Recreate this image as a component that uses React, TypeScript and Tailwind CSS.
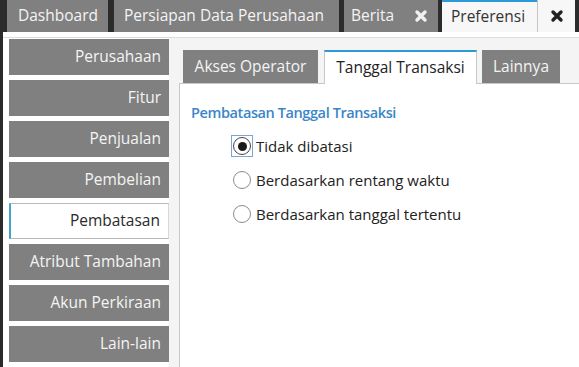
import React from 'react';

const CloseIcon: React.FC<{ className?: string }> = ({ className }) => (
  <svg viewBox="0 0 14 14" className={className} fill="none">
    <path d="M3 3 L11 11 M11 3 L3 11" stroke="currentColor" strokeWidth="3.4" strokeLinecap="round" />
  </svg>
);

const Radio: React.FC<{ checked?: boolean; label: string }> = ({ checked, label }) => (
  <div className="flex items-center h-[34px]">
    <div className={`w-[22px] h-[22px] flex items-center justify-center ${checked ? 'border border-[#7aa7d6]' : ''}`}>
      <div className={`w-[18px] h-[18px] rounded-full border-[1.5px] bg-white flex items-center justify-center ${checked ? 'border-[#444]' : 'border-[#8c8c8c]'}`}>
        {checked && <div className="w-[9px] h-[9px] rounded-full bg-[#1a1a1a]" />}
      </div>
    </div>
    <span className="ml-[3px] text-[15px] text-[#222]">{label}</span>
  </div>
);

const menu = ['Perusahaan', 'Fitur', 'Penjualan', 'Pembelian', 'Pembatasan', 'Atribut Tambahan', 'Akun Perkiraan', 'Lain-lain'];

export default function App() {
  return (
    <div className="w-[579px] h-[367px] overflow-hidden bg-[#2b2b2b] flex flex-col font-['Open_Sans',sans-serif]">
      {/* top tabs */}
      <div className="h-[32px] flex items-stretch pl-[7px] shrink-0 text-[15.5px]">
        <div className="w-[101px] bg-[#808080] text-[#f4f4f4] flex items-center pl-[11px]">Dashboard</div>
        <div className="w-[225px] ml-[6px] bg-[#808080] text-[#f4f4f4] flex items-center pl-[10px]">Persiapan Data Perusahaan</div>
        <div className="w-[94px] ml-[5px] bg-[#808080] text-[#f4f4f4] flex items-center pl-[7px]">
          Berita
          <CloseIcon className="w-[14px] h-[14px] ml-auto mr-[10px] text-[#f0f0f0]" />
        </div>
        <div className="w-[95px] ml-[4px] bg-[#f7f7f7] border-t-2 border-[#2d9ad8] text-[#333] flex items-center pl-[9px]">Preferensi</div>
        <div className="w-[38px] bg-[#f7f7f7] border-l border-[#c4c4c4] flex items-center justify-center">
          <CloseIcon className="w-[14px] h-[14px] text-[#222]" />
        </div>
      </div>

      {/* main */}
      <div className="flex-1 ml-[3px] bg-white pt-[5px] flex flex-col min-h-0">
        <div className="flex-1 border-t border-[#dcdcdc] flex min-h-0">
          {/* sidebar */}
          <div className="w-[166px] pl-[6px] pt-[1px] flex flex-col gap-[5px] shrink-0 text-[15.5px]">
            {menu.map((m) =>
              m === 'Pembatasan' ? (
                <div key={m} className="h-[36px] bg-white border-l-2 border-l-[#41a3c6] border-y border-y-[#b8b8b8] border-r border-r-[#d8d8d8] text-[#2a2a2a] flex items-center justify-end pr-[8px]">
                  {m}
                </div>
              ) : (
                <div key={m} className="h-[36px] bg-[#808080] text-[#f4f4f4] flex items-center justify-end pr-[8px]">
                  {m}
                </div>
              )
            )}
          </div>

          {/* right panel */}
          <div className="flex-1 bg-[#f4f4f4] pl-[10px] pt-[12px] flex flex-col min-w-0">
            <div className="flex items-end h-[33px] pl-[4px] relative z-10 text-[15.5px]">
              <div className="w-[135px] h-[33px] bg-[#808080] text-[#f4f4f4] flex items-center justify-center">Akses Operator</div>
              <div className="w-[153px] h-[34px] ml-[6px] -mb-[1px] bg-white border-t-2 border-t-[#2d9ad8] border-x border-x-[#c8c8c8] text-[#222] flex items-center justify-center">Tanggal Transaksi</div>
              <div className="w-[78px] h-[33px] ml-[5px] bg-[#808080] text-[#f4f4f4] flex items-center justify-center">Lainnya</div>
            </div>
            <div className="flex-1 bg-white border-l border-t border-[#c8c8c8] pl-[11px] pt-[18px]">
              <div className="text-[14.5px] font-semibold tracking-[-0.4px] text-[#3a86c8] leading-[22px]">Pembatasan Tanggal Transaksi</div>
              <div className="pl-[40px] pt-[5px] flex flex-col">
                <Radio checked label="Tidak dibatasi" />
                <Radio label="Berdasarkan rentang waktu" />
                <Radio label="Berdasarkan tanggal tertentu" />
              </div>
            </div>
          </div>
        </div>
      </div>
    </div>
  );
}
